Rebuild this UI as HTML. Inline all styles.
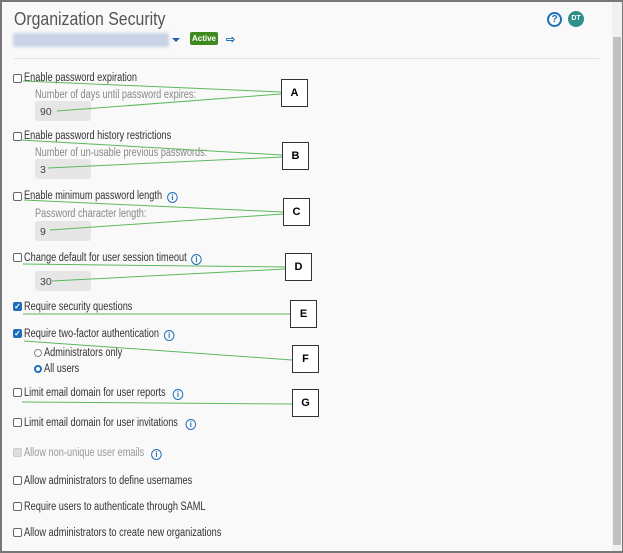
<!DOCTYPE html>
<html><head><style>
*{margin:0;padding:0;box-sizing:border-box}
body{width:623px;height:553px;background:#fff;font-family:"Liberation Sans",sans-serif;position:relative;overflow:hidden}
.frame{position:absolute;left:0;top:0;width:623px;height:553px;border:2px solid #777;border-right-width:1px;background:#f9f9f9}
.t{position:absolute;font-size:11.5px;color:#333;white-space:nowrap;line-height:12px;transform:scaleX(0.8);transform-origin:0 0}
.g{color:#888}
.cb{position:absolute;width:9px;height:9px;border:1px solid #666;border-radius:2px;background:#fff;color:#fff;font-size:8px;line-height:7px;text-align:center;font-weight:bold}
.cb.on{background:#1e6fb8;border-color:#1e6fb8}
.inp{position:absolute;left:35px;width:56px;height:20px;background:#e6e6e6;border-radius:3px;font-size:10.5px;color:#444;padding:5px 0 0 5px}
.info{display:inline-block;width:11px;height:11px;border:1.3px solid #1e6fb8;border-radius:50%;color:#1e6fb8;font-size:8px;font-weight:bold;text-align:center;line-height:9px;margin-left:7px;vertical-align:-1px;transform:scaleX(1.2)}
.box{position:absolute;width:27px;height:28px;border:1px solid #333;background:#fff;font-size:11px;font-weight:bold;text-align:center;line-height:26px}
</style></head><body>
<div class="frame"></div>
<div class="t" style="left:14px;top:9px;font-size:18px;color:#555;line-height:20px;transform:scaleX(0.88)">Organization Security</div>
<div style="position:absolute;left:13px;top:33px;width:156px;height:14px;background:#c8d2e4;border-radius:2px;filter:blur(1.5px)"></div>
<div style="position:absolute;left:172px;top:38px;border-left:4px solid transparent;border-right:4px solid transparent;border-top:4px solid #1e5fa8"></div>
<div style="position:absolute;left:190px;top:32px;width:28px;height:13px;background:#3f8a1f;border-radius:2px;color:#fff;font-size:8px;font-weight:bold;text-align:center;line-height:13px">Active</div>
<div style="position:absolute;left:226px;top:33px;color:#1e6fb8;font-size:11px;font-weight:bold">⇨</div>
<div style="position:absolute;left:547px;top:12px;width:15px;height:15px;border:2px solid #1e6fb8;border-radius:50%;color:#1e6fb8;font-size:10px;font-weight:bold;text-align:center;line-height:12px">?</div>
<div style="position:absolute;left:568px;top:11px;width:16px;height:16px;background:#2f8f89;border-radius:50%;color:#fff;font-size:7px;font-weight:bold;text-align:center;line-height:16px">DT</div>
<div style="position:absolute;left:14px;top:58px;width:585px;height:1px;background:#e4e4e4"></div>
<div style="position:absolute;left:612px;top:2px;width:10px;height:549px;background:#f0f0f0"></div>
<div style="position:absolute;left:613px;top:37px;width:8px;height:508px;background:#c1c1c1"></div>

<div class="cb" style="left:13px;top:74px"></div><div class="t" style="left:24px;top:72px">Enable password expiration</div>
<div class="t g" style="left:35px;top:89px">Number of days until password expires:</div>
<div class="inp" style="top:101px">90</div>
<div class="cb" style="left:13px;top:132px"></div><div class="t" style="left:24px;top:130px">Enable password history restrictions</div>
<div class="t g" style="left:35px;top:147px">Number of un-usable previous passwords:</div>
<div class="inp" style="top:159px">3</div>
<div class="cb" style="left:13px;top:192px"></div><div class="t" style="left:24px;top:190px">Enable minimum password length<span class="info">i</span></div>
<div class="t g" style="left:35px;top:208px">Password character length:</div>
<div class="inp" style="top:221px">9</div>
<div class="cb" style="left:13px;top:253px"></div><div class="t" style="left:24px;top:252px">Change default for user session timeout<span class="info">i</span></div>
<div class="inp" style="top:271px">30</div>
<div class="cb on" style="left:13px;top:302px">✓</div><div class="t" style="left:24px;top:301px">Require security questions</div>
<div class="cb on" style="left:13px;top:329px">✓</div><div class="t" style="left:24px;top:328px">Require two-factor authentication<span class="info">i</span></div>
<div style="position:absolute;left:34px;top:349px;width:8px;height:8px;border:1px solid #888;border-radius:50%;background:#fff"></div><div class="t" style="left:44px;top:347px">Administrators only</div>
<div style="position:absolute;left:34px;top:365px;width:8px;height:8px;border:2.5px solid #1e6fb8;border-radius:50%;background:#fff"></div><div class="t" style="left:44px;top:363px">All users</div>
<div class="cb" style="left:13px;top:388px"></div><div class="t" style="left:24px;top:387px">Limit email domain for user reports <span class="info">i</span></div>
<div class="cb" style="left:13px;top:418px"></div><div class="t" style="left:24px;top:417px">Limit email domain for user invitations <span class="info">i</span></div>
<div class="cb" style="left:13px;top:448px;background:#ddd;border-color:#ccc"></div><div class="t" style="left:24px;top:447px;color:#999">Allow non-unique user emails <span class="info">i</span></div>
<div class="cb" style="left:13px;top:476px"></div><div class="t" style="left:24px;top:475px">Allow administrators to define usernames</div>
<div class="cb" style="left:13px;top:502px"></div><div class="t" style="left:24px;top:501px">Require users to authenticate through SAML</div>
<div class="cb" style="left:13px;top:528px"></div><div class="t" style="left:24px;top:527px">Allow administrators to create new organizations</div>

<svg style="position:absolute;left:0;top:0" width="623" height="553"><g stroke="#5cb85c" stroke-width="1" fill="none">
<path d="M23 81L281 92M57 111L281 94"/>
<path d="M20 140L282 155M48 168L282 157"/>
<path d="M24 200L283 212M50 230L283 214"/>
<path d="M23 264L285 267M52 281L285 269"/>
<path d="M23 314L290 314"/>
<path d="M24 341L292 360"/>
<path d="M22 402L292 404"/>
</g></svg>
<div class="box" style="left:281px;top:79px">A</div>
<div class="box" style="left:282px;top:142px">B</div>
<div class="box" style="left:283px;top:198px">C</div>
<div class="box" style="left:285px;top:253px">D</div>
<div class="box" style="left:290px;top:300px">E</div>
<div class="box" style="left:292px;top:345px">F</div>
<div class="box" style="left:292px;top:389px">G</div>
</body></html>
